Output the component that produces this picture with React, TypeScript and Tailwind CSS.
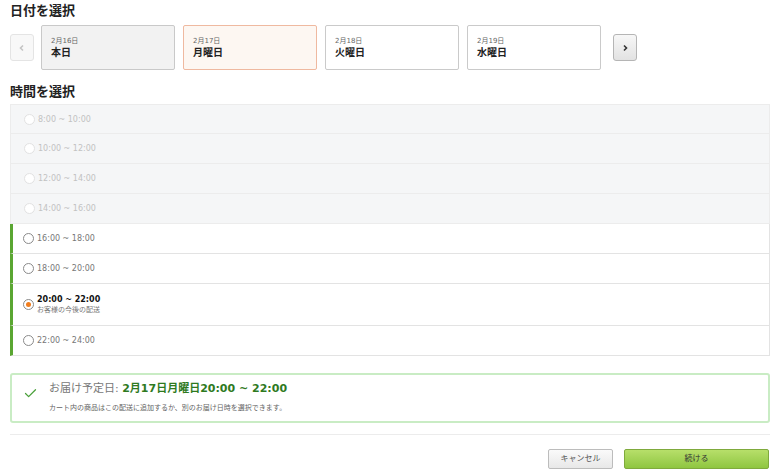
import { Check } from "lucide-react";

const font = { fontFamily: '"DejaVu Sans", "Noto Sans CJK JP", sans-serif' };

type Slot = { label: string; disabled?: boolean; selected?: boolean; note?: string };

const slots: Slot[] = [
  { label: "8:00 ~ 10:00", disabled: true },
  { label: "10:00 ~ 12:00", disabled: true },
  { label: "12:00 ~ 14:00", disabled: true },
  { label: "14:00 ~ 16:00", disabled: true },
  { label: "16:00 ~ 18:00" },
  { label: "18:00 ~ 20:00" },
  { label: "20:00 ~ 22:00", selected: true, note: "お客様の今後の配送" },
  { label: "22:00 ~ 24:00" },
];

const days = [
  { date: "2月16日", name: "本日", kind: "today" },
  { date: "2月17日", name: "月曜日", kind: "active" },
  { date: "2月18日", name: "火曜日", kind: "plain" },
  { date: "2月19日", name: "水曜日", kind: "plain" },
];

function Chevron({ dir, color }: { dir: "l" | "r"; color: string }) {
  return (
    <svg width="8" height="8" viewBox="0 0 8 8">
      <path
        d={dir === "l" ? "M5 1.5 L2.5 4 L5 6.5" : "M3 1.5 L5.5 4 L3 6.5"}
        fill="none"
        stroke={color}
        strokeWidth="1.6"
      />
    </svg>
  );
}

function Radio({ disabled, selected }: { disabled?: boolean; selected?: boolean }) {
  return (
    <span
      className={`flex items-center justify-center w-[11px] h-[11px] rounded-full border bg-white shrink-0 ${
        disabled ? "border-[#e2e2e2]" : "border-[#8a8a8a]"
      }`}
    >
      {selected && <span className="w-[5px] h-[5px] rounded-full bg-[#f07d1e]" />}
    </span>
  );
}

export default function App() {
  return (
    <div className="w-[780px] h-[475px] bg-white px-[10px] text-[#333]" style={font}>
      <h2 className="text-[13px] font-bold leading-[20px] pt-[1px] text-[#222]">日付を選択</h2>

      <div className="flex items-center mt-[4px] h-[45px]">
        <button className="w-[24px] h-[27px] flex items-center justify-center rounded-[3px] border border-[#e4e4e4] bg-[#f8f8f8]">
          <Chevron dir="l" color="#c4c4c4" />
        </button>
        <div className="flex gap-[8px] ml-[7px]">
          {days.map((d) => (
            <div
              key={d.date}
              className={`w-[134px] h-[45px] rounded-[2px] border px-[9px] pt-[11px] ${
                d.kind === "today"
                  ? "bg-[#f2f2f2] border-[#c9c9c9]"
                  : d.kind === "active"
                  ? "bg-[#fdf7f2] border-[#efb9a0]"
                  : "bg-white border-[#cacaca]"
              }`}
            >
              <div className="text-[7px] leading-[9px] text-[#666]">{d.date}</div>
              <div className="text-[10px] leading-[14px] font-bold text-[#222]">{d.name}</div>
            </div>
          ))}
        </div>
        <button className="ml-[12px] w-[24px] h-[27px] flex items-center justify-center rounded-[3px] border border-[#b5b5b5] bg-gradient-to-b from-[#f7f7f7] to-[#e2e2e2]">
          <Chevron dir="r" color="#333" />
        </button>
      </div>

      <h2 className="text-[13px] font-bold leading-[20px] mt-[12px] text-[#222]">時間を選択</h2>

      <div className="mt-[2px] flex flex-col">
        {slots.map((s) => (
          <div
            key={s.label}
            className={`flex items-center border border-t-0 first:border-t ${
              s.disabled
                ? "bg-[#f5f6f7] border-[#ececec] pl-[13px]"
                : "bg-white border-[#e3e3e3] border-l-[3px] border-l-[#5aa632] pl-[10px]"
            } ${s.selected ? "h-[42px]" : "h-[30px]"}`}
          >
            <Radio disabled={s.disabled} selected={s.selected} />
            <div className="ml-[3px]">
              <div
                className={`text-[8px] leading-[11px] ${
                  s.disabled ? "text-[#c2c2c2]" : s.selected ? "text-[#111] font-bold" : "text-[#777]"
                }`}
              >
                {s.label}
              </div>
              {s.note && <div className="text-[7px] leading-[10px] text-[#777]">{s.note}</div>}
            </div>
          </div>
        ))}
      </div>

      <div className="mt-[17px] h-[50px] rounded-[3px] border-2 border-[#c9ecc4] flex items-start pl-[11px] pt-[5px]">
        <Check className="w-[15px] h-[15px] text-[#4aa03a] mt-[6px]" strokeWidth={2} />
        <div className="ml-[11px]">
          <div className="text-[11px] leading-[17px]">
            <span className="text-[#777]">お届け予定日: </span>
            <span className="font-bold text-[#2f7a1f]">2月17日月曜日20:00 ~ 22:00</span>
          </div>
          <div className="text-[7px] leading-[10px] mt-[6px] text-[#666]">
            カート内の商品はこの配送に追加するか、別のお届け日時を選択できます。
          </div>
        </div>
      </div>

      <div className="mt-[11px] border-t border-[#ececec]" />

      <div className="flex justify-end gap-[11px] mt-[14px] pr-[1px]">
        <button className="w-[65px] h-[20px] rounded-[2px] border border-[#bcbcbc] bg-gradient-to-b from-[#fafafa] to-[#e8e8e8] text-[8px] text-[#555]">
          キャンセル
        </button>
        <button className="w-[145px] h-[20px] rounded-[2px] border border-[#7faa3d] bg-gradient-to-b from-[#b7df6a] to-[#8fc640] text-[8px] text-[#333]">
          続ける
        </button>
      </div>
    </div>
  );
}
